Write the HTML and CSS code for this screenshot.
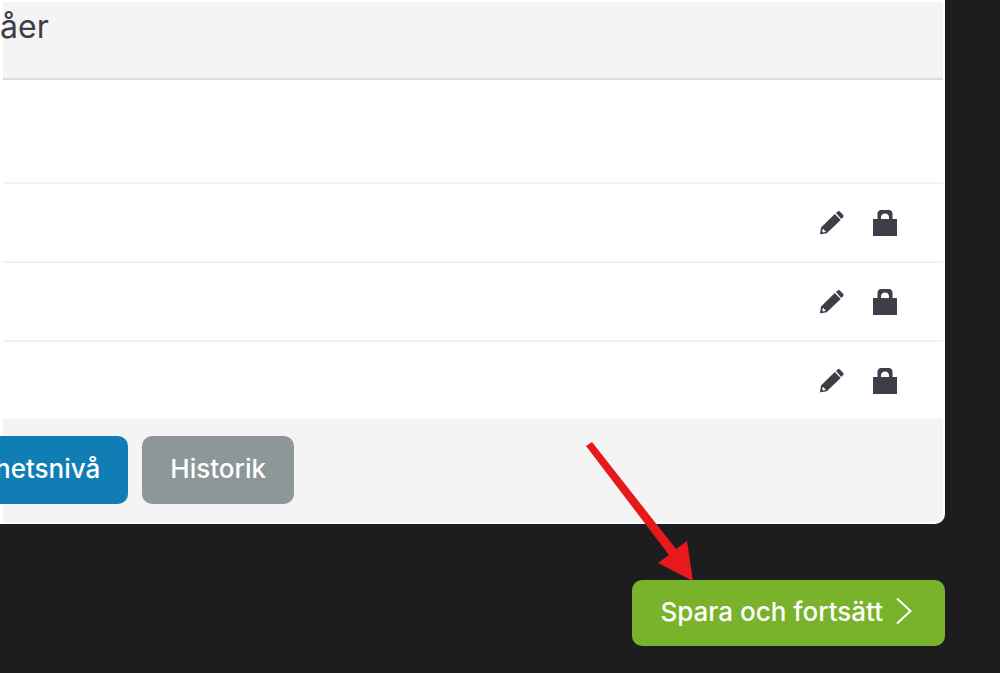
FILE: index.html
```
<!DOCTYPE html>
<html lang="sv">
<head>
    <meta charset="UTF-8">
    <meta name="viewport" content="width=device-width, initial-scale=1.0">
    <title>Behörighetsnivåer</title>
    <link rel="stylesheet" href="styles.css">
</head>
<body>

    <!-- Icons used in the rows -->
    <svg class="sprite" aria-hidden="true">
        <symbol id="pencil" viewBox="0 0 24 24">
            <path d="M16 1.900 18 .3q1-.7 1.900.2l3.300 3.500q.9 1 0 1.900l-1.900 2zM14.800 2.900l5.900 6L6.700 22.300.8 23.300q-.8 0-.7-.8l.9-6.100zM2.600 18.300l-.3 2.300.8.800 2.300-.4.2-1.200-1.400-.2-.2-1.300z" fill-rule="evenodd"/>
        </symbol>
        <symbol id="lock" viewBox="0 0 26 28">
            <path d="M1 10h4.500V4.500Q6 1 9 1h8q3 0 3.500 3.500V10H25v17H1zM9 10h8V8Q16.500 4.500 13 4.500T9 8z" fill-rule="evenodd"/>
        </symbol>
    </svg>

    <main class="page">
        <section class="card">
            <header class="card-header">
                <h1>åer</h1>
            </header>

            <div class="row row-head"></div>
            <div class="row">
                <button class="icon-btn" aria-label="Redigera"><svg class="pencil"><use href="#pencil"/></svg></button>
                <button class="icon-btn" aria-label="Lås"><svg class="lock"><use href="#lock"/></svg></button>
            </div>
            <div class="row">
                <button class="icon-btn" aria-label="Redigera"><svg class="pencil"><use href="#pencil"/></svg></button>
                <button class="icon-btn" aria-label="Lås"><svg class="lock"><use href="#lock"/></svg></button>
            </div>
            <div class="row row-last">
                <button class="icon-btn" aria-label="Redigera"><svg class="pencil"><use href="#pencil"/></svg></button>
                <button class="icon-btn" aria-label="Lås"><svg class="lock"><use href="#lock"/></svg></button>
            </div>

            <footer class="card-footer">
                <button class="btn btn-blue">hetsnivå</button>
                <button class="btn btn-gray">Historik</button>
            </footer>
        </section>

        <div class="actions">
            <button class="btn btn-green">
                Spara och fortsätt
                <svg class="chevron" viewBox="0 0 18 28"><path d="M2 1.500 15.500 14 2 26.500"/></svg>
            </button>
            <svg class="arrow" viewBox="0 0 110 142" aria-hidden="true">
                <path d="M3 5 9 1 93 108 104 100 110 140 75 122 86 114z"/>
            </svg>
        </div>
    </main>

</body>
</html>
```

FILE: styles.css
```
* {
    box-sizing: border-box;
}

body {
    margin: 0;
    background-color: #1d1d1d;
    color: #3d3e47;
    font-family: Inter, "Liberation Sans", sans-serif;
    overflow-x: hidden;
}

.sprite {
    display: none;
}

.page {
    margin-right: 55px;
}

.card {
    background-color: #fff;
    border: 2px solid #fff;
    border-bottom-width: 1px;
    border-left-width: 3px;
    border-radius: 0 0 10px 0;
}

.card-header {
    height: 78px;
    background-color: #f4f4f4;
    border-bottom: 2px solid #dcdcdc;
}

.card-header h1 {
    margin: 0 0 0 -3px;
    padding-top: 4px;
    font-size: 32px;
    line-height: 42px;
    font-weight: 400;
}

.row {
    display: flex;
    align-items: center;
    justify-content: flex-end;
    gap: 28px;
    height: 79px;
    padding-right: 45px;
    border-bottom: 2px solid #f1f1f1;
}

.row-head {
    height: 104px;
}

.row-last {
    height: 77px;
    border-bottom: none;
}

.icon-btn {
    padding: 0;
    border: none;
    background: none;
    color: #3d3e47;
    cursor: pointer;
}

.icon-btn svg {
    display: block;
    fill: currentColor;
}

.pencil {
    width: 24px;
    height: 24px;
}

.lock {
    width: 26px;
    height: 28px;
}

.card-footer {
    display: flex;
    gap: 14px;
    padding: 17px 0 19px;
    background-color: #f4f4f4;
    border-radius: 0 0 8px 0;
}

.btn {
    height: 68px;
    padding: 0 28px 4px;
    border: none;
    border-radius: 10px;
    color: #fff;
    font-family: inherit;
    font-size: 26px;
    font-weight: 500;
    cursor: pointer;
}

.btn-blue {
    margin-left: -36px;
    background-color: #117db5;
}

.btn-gray {
    background-color: #8d9698;
}

.actions {
    position: relative;
    display: flex;
    justify-content: flex-end;
    padding: 56px 0 26px;
}

.btn-green {
    display: flex;
    align-items: center;
    gap: 12px;
    height: 66px;
    padding-right: 32px;
    background-color: #79b32b;
}

.chevron {
    width: 18px;
    height: 28px;
    fill: none;
    stroke: #fff;
    stroke-width: 2;
}

/* Pointer over the save button */
.arrow {
    position: absolute;
    right: 252px;
    top: -83px;
    width: 110px;
    height: 142px;
    fill: #e8191c;
    pointer-events: none;
}
```
